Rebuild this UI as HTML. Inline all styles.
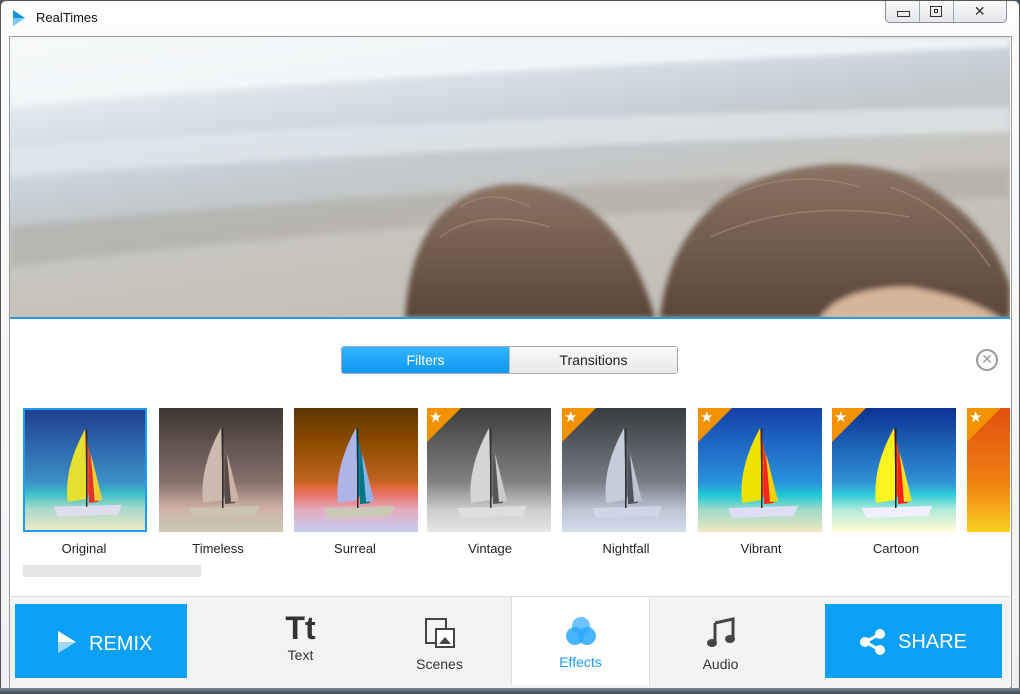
<!DOCTYPE html>
<html><head><meta charset="utf-8"><style>
*{margin:0;padding:0;box-sizing:border-box}
body{width:1020px;height:694px;overflow:hidden;background:#4c5a66;font-family:"Liberation Sans",sans-serif;position:relative}
.win{position:absolute;left:0;top:0;width:1020px;height:694px;background:linear-gradient(#fdfdfd,#eef0f3);border:1px solid #555;border-radius:6px 6px 0 0}
.title{position:absolute;left:36px;top:10px;font-size:13px;color:#111}
.ctl{position:absolute;top:1px;left:885px;width:122px;height:22px;border:1px solid #8a8f96;border-top:none;border-radius:0 0 5px 5px;background:linear-gradient(#fafafa,#e4e6ea);display:flex}
.ctl div{flex:1;border-right:1px solid #9aa;position:relative}
.ctl div:last-child{border:none;flex:1.6}
.content{position:absolute;left:9px;top:36px;width:1003px;height:652px;background:#fff;border:1px solid #999}
.photo{position:absolute;left:10px;top:37px;width:1000px;height:281px;overflow:hidden;background:linear-gradient(172deg,#f2f5f7 0%,#e2e9ee 18%,#cdd8e0 32%,#c2c8cc 45%,#c8c4bc 62%,#bfbab2 100%)}
.blue{position:absolute;left:10px;top:317px;width:1000px;height:2px;background:#2a9be0}
.seg{position:absolute;left:341px;top:346px;width:337px;height:28px;border:1px solid #aab;border-radius:3px;display:flex;overflow:hidden;font-size:14px}
.seg div{flex:1;text-align:center;line-height:26px}
.thumb{position:absolute;top:408px;width:124px;height:124px;overflow:hidden}
.lbl{position:absolute;top:541px;font-size:13px;color:#222;text-align:center;width:124px}
.star{position:absolute;left:0;top:0;width:0;height:0;border-top:34px solid #f39200;border-right:34px solid transparent}
.star span{position:absolute;top:-34px;left:2px;color:#fff;font-size:15px}
.bar{position:absolute;left:10px;top:596px;width:1000px;height:92px;background:#f3f3f3;border-top:1px solid #ddd}
.btn{position:absolute;background:#0aa0f6;color:#fff;font-size:20px}
.tab{position:absolute;top:597px;height:88px;width:139px;text-align:center;font-size:14px;color:#333}
</style></head><body>
<div class="win"></div>
<svg style="position:absolute;left:12px;top:9px" width="14" height="18"><path d="M1 1 L13 9 L1 17Z" fill="#1a8fe0"/><path d="M1 9 L13 9 L1 17Z" fill="#7cc8f4"/></svg>
<div class="title">RealTimes</div>
<div class="ctl"><div><span style="position:absolute;left:11px;top:10px;width:13px;height:6px;border:1px solid #333"></span></div><div><span style="position:absolute;left:10px;top:5px;width:12px;height:11px;border:1px solid #333"></span><span style="position:absolute;left:14px;top:8px;width:4px;height:4px;border:1px solid #333"></span></div><div style="text-align:center;font-size:14px;line-height:20px;color:#333">✕</div></div>
<div class="content"></div>
<div style="position:absolute;left:0;top:688px;width:1020px;height:6px;background:linear-gradient(#7a8894,#3e4a55)"></div>
<div class="photo">
<svg width="1000" height="281" style="position:absolute;left:0;top:0">
<defs><linearGradient id="h" x1="0" y1="0" x2="0" y2="1"><stop offset="0" stop-color="#8a7464"/><stop offset="1" stop-color="#5a4638"/></linearGradient>
<filter id="bl"><feGaussianBlur stdDeviation="3"/></filter></defs>
<path d="M0 70 Q300 40 1000 10 L1000 0 L0 0Z" fill="#f8fafb" opacity=".8" filter="url(#bl)"/>
<path d="M0 110 Q400 80 1000 70 L1000 95 Q400 110 0 140Z" fill="#e8eef2" opacity=".6" filter="url(#bl)"/>
<path d="M0 190 Q400 150 1000 130 L1000 160 Q400 180 0 230Z" fill="#a8a29a" opacity=".45" filter="url(#bl)"/>
<g filter="url(#bl)">
<path d="M395 281 Q400 200 440 170 Q490 130 560 160 Q620 190 645 281Z" fill="url(#h)"/>
<path d="M650 281 Q660 190 730 150 Q820 110 900 140 Q980 180 1000 250 L1000 281Z" fill="url(#h)"/>
<path d="M810 281 Q830 250 900 250 Q960 260 990 281Z" fill="#d7b59c"/>
</g>
<g stroke="#a08a78" stroke-width="1.5" fill="none" opacity=".7">
<path d="M450 170 Q480 150 520 170"/><path d="M430 200 Q470 170 540 190"/><path d="M720 160 Q780 130 850 150"/><path d="M700 200 Q790 160 900 180"/><path d="M880 150 Q940 170 980 230"/>
</g>
</svg></div>
<div class="blue"></div>
<div class="seg"><div style="background:linear-gradient(#33b4ff,#0d98f3);color:#fff">Filters</div><div style="background:linear-gradient(#fafafa,#e8e8e8);color:#222;border-left:1px solid #bbb">Transitions</div></div>
<div style="position:absolute;left:976px;top:349px;width:22px;height:22px;border:2px solid #999;border-radius:50%;text-align:center;line-height:17px;color:#999;font-size:14px">✕</div>

<svg width="0" height="0" style="position:absolute"><defs><symbol id="boat" viewBox="0 0 124 124">
<defs><linearGradient id="sk" x1="0" y1="0" x2="0" y2="1"><stop offset="0" stop-color="#1f3f8f"/><stop offset=".6" stop-color="#3d8fc8"/><stop offset=".7" stop-color="#3cc0c8"/><stop offset=".82" stop-color="#a8d8c8"/><stop offset="1" stop-color="#eee8c8"/></linearGradient></defs>
<rect width="124" height="124" fill="url(#sk)"/>
<path d="M62 20 Q40 60 44 95 L64 92Z" fill="#e8e030"/>
<path d="M62 20 L64 92 L72 70Z" fill="#e8502a"/>
<path d="M66 45 L76 95 L66 96Z" fill="#e8302a"/>
<path d="M68 45 L80 93 L72 94Z" fill="#f0d030"/>
<path d="M30 100 L100 98 L96 108 L34 110Z" fill="#dde" /><rect x="63" y="20" width="1.5" height="80" fill="#333"/>
</symbol></defs></svg>

<div class="thumb" style="left:23px;border:2px solid #1e9df0"><svg width="120" height="120"><use href="#boat"/></svg></div>
<div class="thumb" style="left:159px;filter:grayscale(1) sepia(.6) hue-rotate(-30deg) brightness(.8)"><svg width="124" height="124"><use href="#boat"/></svg></div>
<div class="thumb" style="left:294px;filter:hue-rotate(180deg) saturate(1.3) brightness(.9)"><svg width="124" height="124"><use href="#boat"/></svg></div>
<div class="thumb" style="left:427px"><svg width="124" height="124" style="filter:grayscale(1)"><use href="#boat"/></svg><div class="star"><span>★</span></div></div>
<div class="thumb" style="left:562px"><svg width="124" height="124" style="filter:grayscale(1) sepia(.3) hue-rotate(180deg) brightness(.9)"><use href="#boat"/></svg><div class="star"><span>★</span></div></div>
<div class="thumb" style="left:698px"><svg width="124" height="124" style="filter:saturate(1.3)"><use href="#boat"/></svg><div class="star"><span>★</span></div></div>
<div class="thumb" style="left:832px"><svg width="124" height="124" style="filter:contrast(1.2)"><use href="#boat"/></svg><div class="star"><span>★</span></div></div>
<div class="thumb" style="left:967px;width:43px"><div style="width:43px;height:124px;background:linear-gradient(#e05010,#f08010 60%,#f8d020)"></div><div class="star"><span>★</span></div></div>
<div class="lbl" style="left:22px">Original</div><div class="lbl" style="left:156px">Timeless</div><div class="lbl" style="left:293px">Surreal</div><div class="lbl" style="left:428px">Vintage</div><div class="lbl" style="left:564px">Nightfall</div><div class="lbl" style="left:699px">Vibrant</div><div class="lbl" style="left:834px">Cartoon</div>
<div style="position:absolute;left:23px;top:565px;width:178px;height:12px;background:#e6e6e6"></div>

<div class="bar"></div>
<div class="btn" style="left:15px;top:604px;width:172px;height:74px"><svg style="position:absolute;left:42px;top:26px" width="20" height="24"><path d="M1 1 L19 12 L1 23Z" fill="#fff"/><path d="M1 12 L19 12 L1 23Z" fill="#9fd8fa"/></svg><span style="position:absolute;left:74px;top:29px">REMIX</span></div>
<div class="tab" style="left:231px"><div style="font-size:32px;font-weight:bold;color:#333;margin-top:16px;line-height:30px">Tt</div><div style="margin-top:4px">Text</div></div>
<div class="tab" style="left:370px"><svg style="margin-top:20px" width="32" height="32"><rect x="2" y="2" width="20" height="24" fill="none" stroke="#444" stroke-width="2"/><rect x="12" y="12" width="18" height="18" fill="#fff" stroke="#444" stroke-width="2"/><path d="M15 27 L21 20 L27 27Z" fill="#444"/></svg><div style="margin-top:4px">Scenes</div></div>
<div class="tab" style="left:511px;background:#fff;border-left:1px solid #ddd;border-right:1px solid #ddd"><svg style="margin-top:18px" width="34" height="34"><circle cx="17" cy="11" r="9" fill="#6cc4ff"/><circle cx="11" cy="21" r="9" fill="#2aa8ff" opacity=".85"/><circle cx="23" cy="21" r="9" fill="#2aa8ff" opacity=".85"/></svg><div style="color:#1a9cf0;margin-top:2px">Effects</div></div>
<div class="tab" style="left:651px"><svg style="margin-top:20px" width="30" height="32"><path d="M9 6 L27 2 L27 22" stroke="#444" stroke-width="3" fill="none"/><path d="M9 6 L9 26" stroke="#444" stroke-width="3"/><ellipse cx="6" cy="26" rx="5" ry="4" fill="#444"/><ellipse cx="24" cy="22" rx="5" ry="4" fill="#444"/></svg><div style="margin-top:4px">Audio</div></div>
<div class="btn" style="left:825px;top:604px;width:177px;height:74px"><svg style="position:absolute;left:34px;top:24px" width="28" height="28"><circle cx="21" cy="6" r="5" fill="#fff"/><circle cx="6" cy="14" r="5" fill="#fff"/><circle cx="21" cy="22" r="5" fill="#fff"/><path d="M21 6 L6 14 L21 22" stroke="#fff" stroke-width="3" fill="none"/></svg><span style="position:absolute;left:73px;top:27px">SHARE</span></div>
</body></html>
